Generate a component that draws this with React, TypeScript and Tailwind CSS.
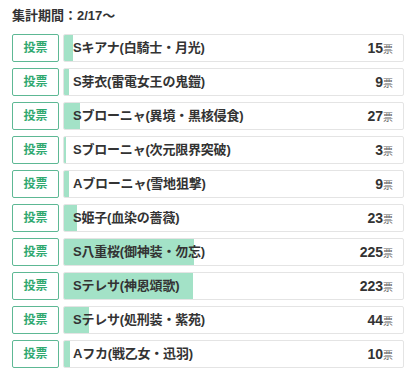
const rows = [
  { name: 'Sキアナ(白騎士・月光)', votes: 15 },
  { name: 'S芽衣(雷電女王の鬼鎧)', votes: 9 },
  { name: 'Sブローニャ(異境・黒核侵食)', votes: 27 },
  { name: 'Sブローニャ(次元限界突破)', votes: 3 },
  { name: 'Aブローニャ(雪地狙撃)', votes: 9 },
  { name: 'S姫子(血染の薔薇)', votes: 23 },
  { name: 'S八重桜(御神装・勿忘)', votes: 225 },
  { name: 'Sテレサ(神恩頌歌)', votes: 223 },
  { name: 'Sテレサ(処刑装・紫苑)', votes: 44 },
  { name: 'Aフカ(戦乙女・迅羽)', votes: 10 },
];

export default function App() {
  const total = rows.reduce((s, r) => s + r.votes, 0);

  return (
    <div className="w-[416px] h-[378px] bg-white px-3 pt-[7px] font-['Liberation_Sans','Noto_Sans_CJK_JP',sans-serif] text-[#333]">
      <h2 className="text-[13px] font-bold leading-[18px] mb-[9px]">集計期間：2/17〜</h2>
      <div className="flex flex-col gap-[6px]">
        {rows.map((r) => (
          <div key={r.name} className="flex gap-1 h-[28px]">
            <button className="w-[47px] shrink-0 border border-[#5db894] rounded-[2px] bg-white text-[#2fa86f] text-[12px] font-bold">
              投票
            </button>
            <div className="relative flex-1 border border-[#e4e4e4] rounded-[2px] overflow-hidden flex items-center justify-between pl-[9px] pr-[10px]">
              <div
                className="absolute left-0 top-0 bottom-0 bg-[#a3e2c7]"
                style={{ width: `${(r.votes / total) * 100}%` }}
              />
              <span className="relative text-[13px] font-bold tracking-[-0.2px]">{r.name}</span>
              <span className="relative text-[14px] font-bold">
                {r.votes}
                <span className="text-[10px] font-normal text-[#666]">票</span>
              </span>
            </div>
          </div>
        ))}
      </div>
    </div>
  );
}
